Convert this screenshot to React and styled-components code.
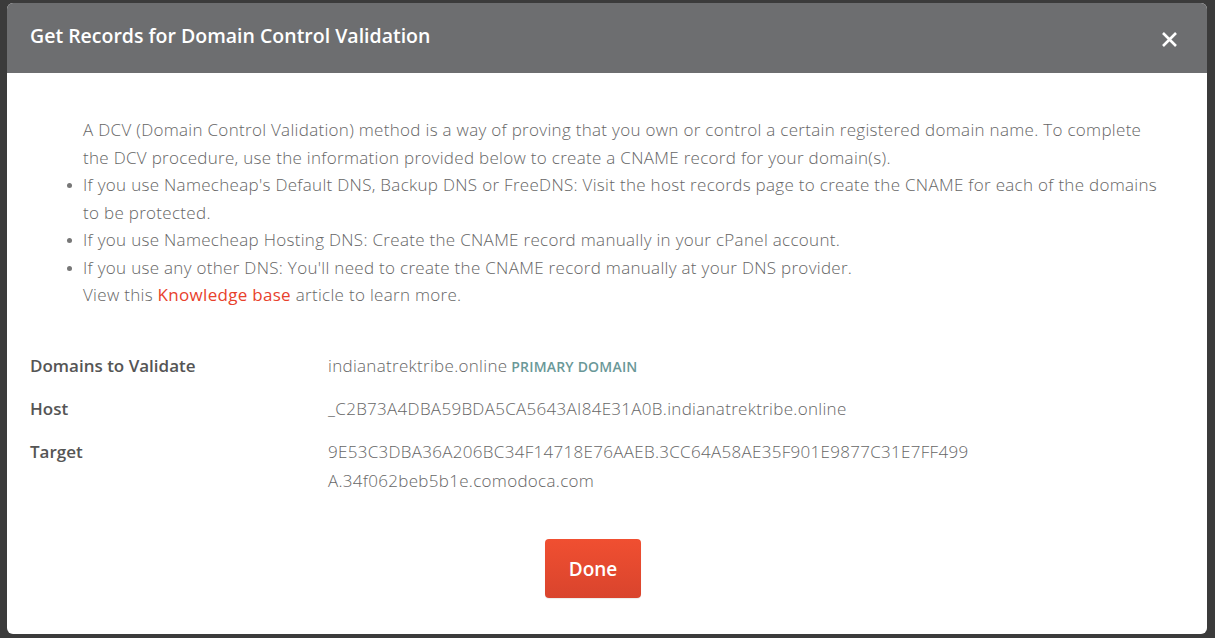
import React from "react";
import styled, { createGlobalStyle } from "styled-components";

const GlobalStyle = createGlobalStyle`
  html, body {
    margin: 0;
    padding: 0;
    background: #3b3b3b;
  }
  body {
    font-family: "Open Sans", "Lato", sans-serif;
  }
`;

const Overlay = styled.div`
  width: 1215px;
  height: 638px;
  padding: 3px 8px 4px 7px;
  box-sizing: border-box;
  overflow: hidden;
`;

const Modal = styled.div`
  width: 1200px;
  height: 631px;
  background: #fff;
  border-radius: 6px;
  overflow: hidden;
  display: flex;
  flex-direction: column;
`;

const Header = styled.div`
  height: 70px;
  flex-shrink: 0;
  background: #6d6e70;
  display: flex;
  align-items: center;
  justify-content: space-between;
  padding: 0 28px 0 23px;
`;

const Title = styled.h2`
  margin: 0 0 6px;
  color: #fff;
  font-size: 19.5px;
  font-weight: 600;
`;

const CloseButton = styled.button`
  background: none;
  border: 0;
  padding: 0;
  width: 20px;
  height: 20px;
  display: flex;
  align-items: center;
  justify-content: center;
  cursor: pointer;
  margin-top: 2px;
`;

const Body = styled.div`
  flex: 1;
  display: flex;
  flex-direction: column;
  padding: 43px 23px 0;
  color: #666;
  font-size: 17px;
  font-weight: 300;
  letter-spacing: 0.3px;
`;

const Intro = styled.div`
  padding-left: 53px;
  padding-right: 20px;
  line-height: 27.5px;
`;

const Paragraph = styled.p`
  margin: 0;
`;

const List = styled.ul`
  margin: 0;
  padding-left: 0;
  list-style: none;
`;

const Item = styled.li`
  position: relative;
  &::before {
    content: "";
    position: absolute;
    left: -16px;
    top: 12px;
    width: 5px;
    height: 5px;
    border-radius: 50%;
    background: #777;
  }
`;

const Link = styled.a`
  color: #e8412c;
  font-weight: 400;
  text-decoration: none;
`;

const Details = styled.dl`
  margin: 42px 0 0;
  display: grid;
  grid-template-columns: 298px 655px;
  row-gap: 13.5px;
`;

const Label = styled.dt`
  margin: 0;
  color: #555;
  font-weight: 600;
  letter-spacing: 0;
  line-height: 29px;
`;

const Value = styled.dd`
  margin: 0;
  line-height: 29px;
  word-break: break-all;
`;

const Badge = styled.span`
  color: #6a9898;
  font-weight: 600;
  font-size: 14px;
  letter-spacing: 0.2px;
  word-break: normal;
`;

const Footer = styled.div`
  display: flex;
  justify-content: center;
  padding-right: 28px;
  margin-top: auto;
  padding-bottom: 36px;
`;

const DoneButton = styled.button`
  width: 96px;
  height: 59px;
  border: 0;
  border-radius: 4px;
  background: linear-gradient(#f04f31, #d9442d);
  color: #fff;
  font-family: "Open Sans", sans-serif;
  font-size: 19px;
  font-weight: 600;
  cursor: pointer;
  box-shadow: 0 1px 1px rgba(0, 0, 0, 0.08);
`;

const CloseIcon = () => (
  <svg width="17" height="17" viewBox="0 0 17 17">
    <path d="M2 2 L15 15 M15 2 L2 15" stroke="#fff" strokeWidth="2.6" />
  </svg>
);

const records = [
  {
    label: "Domains to Validate",
    value: "indianatrektribe.online",
    badge: "PRIMARY DOMAIN",
  },
  {
    label: "Host",
    value: "_C2B73A4DBA59BDA5CA5643AI84E31A0B.indianatrektribe.online",
  },
  {
    label: "Target",
    value:
      "9E53C3DBA36A206BC34F14718E76AAEB.3CC64A58AE35F901E9877C31E7FF499A.34f062beb5b1e.comodoca.com",
  },
];

export default function App() {
  return (
    <>
      <GlobalStyle />
      <Overlay>
        <Modal>
          <Header>
            <Title>Get Records for Domain Control Validation</Title>
            <CloseButton aria-label="Close">
              <CloseIcon />
            </CloseButton>
          </Header>
          <Body>
            <Intro>
              <Paragraph>
                A DCV (Domain Control Validation) method is a way of proving that you own or
                control a certain registered domain name. To complete the DCV procedure, use the
                information provided below to create a CNAME record for your domain(s).
              </Paragraph>
              <List>
                <Item>
                  If you use Namecheap's Default DNS, Backup DNS or FreeDNS: Visit the host records
                  page to create the CNAME for each of the domains to be protected.
                </Item>
                <Item>
                  If you use Namecheap Hosting DNS: Create the CNAME record manually in your cPanel
                  account.
                </Item>
                <Item>
                  If you use any other DNS: You'll need to create the CNAME record manually at your
                  DNS provider.
                  <br />
                  View this <Link href="#">Knowledge base</Link> article to learn more.
                </Item>
              </List>
            </Intro>
            <Details>
              {records.map((r) => (
                <React.Fragment key={r.label}>
                  <Label>{r.label}</Label>
                  <Value>
                    {r.value}
                    {r.badge && <Badge> {r.badge}</Badge>}
                  </Value>
                </React.Fragment>
              ))}
            </Details>
            <Footer>
              <DoneButton>Done</DoneButton>
            </Footer>
          </Body>
        </Modal>
      </Overlay>
    </>
  );
}
